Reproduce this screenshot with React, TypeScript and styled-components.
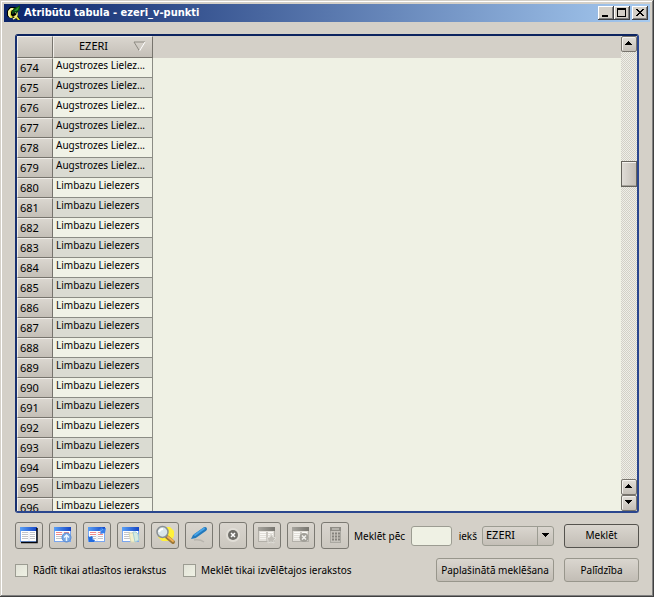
import React from 'react';
import styled, { createGlobalStyle, css } from 'styled-components';

const GlobalStyle = createGlobalStyle`
  * { box-sizing: border-box; }
  html, body { margin: 0; padding: 0; }
  body, button, input, select, table {
    font-family: "Noto Sans", "Open Sans", sans-serif;
    font-size: 10px;
    line-height: 14px;
    color: #000;
  }
`;

const Dialog = styled.div`
  display: flex;
  flex-direction: column;
  height: 100vh;
  padding: 2px;
  background: #d4d0c8;
  box-shadow: inset -1px -1px #404040, inset 1px 1px #d4d0c8, inset -2px -2px #808080, inset 2px 2px #fff;
`;

const TitleBar = styled.header`
  display: flex;
  align-items: center;
  gap: 2px;
  flex: none;
  height: 18px;
  margin: 2px 2px 0;
  padding: 0 2px;
  background: linear-gradient(90deg, #0a246a, #a6caf0);
`;

const TitleText = styled.h1`
  flex: 1;
  margin: 0;
  color: #fff;
  font-family: "DejaVu Sans Condensed", "DejaVu Sans", sans-serif;
  font-size: 11px;
  font-weight: 700;
  white-space: nowrap;
`;

const CaptionButton = styled.button<{ $apart?: boolean }>`
  display: flex;
  width: 16px;
  height: 14px;
  margin-left: ${(p) => (p.$apart ? 0 : -2)}px;
  padding: 0;
  border: 0;
  background: #d4d0c8;
  box-shadow: inset -1px -1px #404040, inset 1px 1px #fff, inset -2px -2px #808080;
`;

const Body = styled.main`
  display: flex;
  flex-direction: column;
  flex: 1;
  min-height: 0;
  padding: 12px 13px 0;
`;

const TableFrame = styled.section`
  display: flex;
  flex: 1;
  min-height: 0;
  border: 2px solid #2a468e;
  border-top-color: #0c2460;
  border-left-color: #183070;
  border-radius: 3px;
  background: #eff1e4;
`;

const TableView = styled.div`
  flex: 1;
  overflow: hidden;
  background: linear-gradient(#d4d0c8 22px, #eff1e4 22px);
`;

const Table = styled.table`
  width: 136px;
  table-layout: fixed;
  border-collapse: separate;
  border-spacing: 0;
`;

const raised = css`
  background: linear-gradient(#dad6cf, #c4bfb7);
  border: 1px solid #77746d;
  border-top-color: #f0ede8;
  border-left-color: #f0ede8;
  font-size: 11px;
  font-weight: 400;
`;

const ColumnHead = styled.th<{ $width: number }>`
  ${raised}
  width: ${(p) => p.$width}px;
  height: 22px;
  padding: 0;
`;

const HeadLabel = styled.span`
  display: flex;
  align-items: center;
  justify-content: space-between;
  padding: 0 6px 2px 25px;
`;

const RowHead = styled.th`
  ${raised}
  height: 20px;
  padding: 0 0 0 2px;
  text-align: left;
`;

const Cell = styled.td`
  height: 20px;
  padding: 0 3px 5px 3px;
  border-right: 1px solid #8b8c84;
  border-bottom: 1px solid #8b8c84;
  white-space: nowrap;
`;

const Row = styled.tr`
  background: #f0f2e6;
  &:nth-child(even) { background: #dadbd2; }
`;

const ScrollBar = styled.div`
  display: flex;
  flex-direction: column;
  width: 16px;
  background: repeating-conic-gradient(#d2d0c6 0 25%, #efeee8 0 50%) 0 0 / 2px 2px;
`;

const ScrollButton = styled.button`
  display: flex;
  align-items: center;
  justify-content: center;
  flex: none;
  height: 16px;
  padding: 0 2px 2px 0;
  border: 1px solid #77746d;
  border-radius: 2px;
  background: linear-gradient(#e2dfd9, #c4bfb7);
  box-shadow: inset 1px 1px #f4f2ee;
`;

const Track = styled.div`
  display: flex;
  flex-direction: column;
  flex: 1;
`;

const TrackSpace = styled.div<{ $share: number }>`
  flex: ${(p) => p.$share};
`;

const Thumb = styled.div`
  height: 26px;
  border: 1px solid #66645d;
  background: linear-gradient(90deg, #dfdcd6, #c4bfb7);
  box-shadow: inset 0 1px #f4f2ee, inset 0 -1px #a5a29a;
`;

const ToolRow = styled.div`
  display: flex;
  align-items: center;
  flex: none;
  height: 27px;
  margin-top: 9px;
`;

const Tools = styled.div`
  display: flex;
  gap: 6px;
`;

const ToolButton = styled.button`
  display: flex;
  align-items: center;
  justify-content: center;
  width: 28px;
  height: 27px;
  padding: 0 0 1px;
  border: 1px solid #7b7972;
  border-radius: 3px;
  background: linear-gradient(#d9d5ce, #cbc7bf);
`;

const FieldLabel = styled.label`
  margin-left: 5px;
  white-space: nowrap;
`;

const SearchInput = styled.input`
  flex: 1;
  min-width: 0;
  height: 20px;
  margin: 0 2px 0 6px;
  padding: 0 3px;
  border: 1px solid #9c9c92;
  border-radius: 3px;
  background: #eff1e4;
`;

const SelectBox = styled.div`
  display: grid;
  width: 72px;
  height: 20px;
  margin: 0 10px 0 5px;
`;

const Select = styled.select`
  grid-area: 1 / 1;
  height: 20px;
  padding: 0 18px 1px 3px;
  appearance: none;
  border: 1px solid #9c9c92;
  border-radius: 3px;
  background: linear-gradient(#dad6cf, #c4bfb7);
  font-size: 11px;
`;

const SelectArrow = styled.span`
  grid-area: 1 / 1;
  justify-self: end;
  display: flex;
  align-items: center;
  justify-content: center;
  width: 17px;
  margin: 1px 0;
  padding: 0 2px 1px 0;
  border-left: 1px solid #9c9c92;
  pointer-events: none;
`;

const PushButton = styled.button<{ $width: number; $main?: boolean }>`
  flex: none;
  width: ${(p) => p.$width}px;
  height: 24px;
  padding: 0 0 1px;
  border: 1px solid ${(p) => (p.$main ? '#55534e' : '#98968c')};
  border-radius: 3px;
  background: linear-gradient(#dad6cf, #c2bdb5);
  white-space: nowrap;
`;

const OptionRow = styled.div`
  display: flex;
  align-items: center;
  flex: none;
  height: 24px;
  margin: 9px 0 13px;
`;

const CheckLabel = styled.label<{ $width: number }>`
  display: flex;
  align-items: center;
  gap: 5px;
  width: ${(p) => p.$width}px;
  white-space: nowrap;
`;

const CheckBox = styled.input`
  flex: none;
  width: 13px;
  height: 13px;
  margin: 0;
  appearance: none;
  border: 1px solid #9c9c92;
  background: linear-gradient(135deg, #e2e3d8, #eff1e4);
`;

const ButtonPair = styled.div`
  display: flex;
  gap: 10px;
  margin-left: auto;
`;

const Arrow = ({ down = false }: { down?: boolean }) => (
  <svg width="7" height="4" viewBox="0 0 7 4" shapeRendering="crispEdges" aria-hidden="true">
    <path d={down ? 'M0 0h7v1H6v1H5v1H4v1H3V3H2V2H1V1H0z' : 'M0 4h7V3H6V2H5V1H4V0H3v1H2v1H1v1H0z'} />
  </svg>
);

const AppLogo = () => (
  <svg width="16" height="16" viewBox="0 0 16 16" aria-hidden="true">
    <path d="M4 2h6l2 3v6l2 3v1h-3l-2-2H4L1 11V6z" fill="#000" />
    <path d="M5 3h3v2H6L5 7v3l2 2h2l3 3h2l-3-4v-1h-1l-2 1-2 2H4l-2-3V6z" fill="#d9d93c" />
    <path d="M3 6l2-2h2M3 6v4l1 2" fill="none" stroke="#fdfcc0" strokeWidth="1.500" />
    <path d="M9 7l2 1v2l-2 3-2 1" fill="none" stroke="#f2f08c" strokeWidth="1.500" />
    <path d="M6 9V6l2-3 3-1 3-2v3l-1 3-2 1v2L9 7 7 9z" fill="#0b4a14" />
    <path d="M8 6l3-3 2-1-1 3-2 1z" fill="#2b9a2b" />
  </svg>
);

const Sheet = ({ gray = false, red = false }: { gray?: boolean; red?: boolean }) => {
  const id = gray ? 'grayBar' : 'blueBar';
  return (
    <>
      <defs>
        <linearGradient id={id} x2="1" y2="0">
          <stop stopColor={gray ? '#a7a59e' : '#5aa0f6'} />
          <stop offset="1" stopColor={gray ? '#77756f' : '#1544c4'} />
        </linearGradient>
      </defs>
      <rect x="0.500" y="0.500" width="16" height="14" fill={gray ? '#e2dfd9' : '#fff'} stroke={gray ? '#b3b0a9' : '#7aa6ee'} />
      <rect width="17" height="4" fill={`url(#${id})`} />
      <path d="M2 5.500h6M10 5.500h5M2 7.500h6M10 7.500h5" stroke={gray ? '#fbfaf7' : red ? '#f08a8a' : '#c2c4ca'} />
      <path d="M2 9.500h6M10 9.500h5M2 11.500h6M10 11.500h5" stroke={gray ? '#f6f5f1' : '#c2c4ca'} />
      <path d="M9 5v9" stroke={gray ? '#b3b0aa' : '#e3e6ee'} />
    </>
  );
};

type IconName = 'table' | 'top' | 'invert' | 'copy' | 'zoom' | 'edit' | 'remove' | 'addColumn' | 'dropColumn' | 'calculator';

const drawings: Record<IconName, React.ReactNode> = {
  table: (
    <>
      <Sheet />
      <path d="M17 1v14.500H1" fill="none" stroke="#05060b" strokeWidth="1.500" />
    </>
  ),
  top: (
    <>
      <Sheet red />
      <circle cx="12.500" cy="10.500" r="4.500" fill="#79a8e4" stroke="#5a8bd2" />
      <path d="M12.500 14V9M10 10.500l2.500-2.500 2.500 2.500" fill="none" stroke="#eef7ff" strokeWidth="1.500" />
    </>
  ),
  invert: (
    <>
      <Sheet red />
      <path d="M11 3l3-3 1 2 3-1-1 5-5 1 1-2z" fill="#377fea" />
      <path d="M0 9l2 1 2-1 1 2-1 1 3 1-1 2H1z" fill="#226ce0" />
      <path d="M12 4q2 0 3-2" fill="none" stroke="#6aa8f8" />
    </>
  ),
  copy: (
    <>
      <Sheet />
      <path d="M7 6h4l2 2v7H9z" fill="#f3f0cc" stroke="#dcdab4" />
      <path d="M11 5h3l2 2 1 6-4 2z" fill="#d6ebe0" stroke="#a6cfd6" />
    </>
  ),
  zoom: (
    <>
      <path d="M8 0h6l4 4v5l-3 5H6l-4-4z" fill="#fff13a" />
      <path d="M11 10l6 5" stroke="#9c7838" strokeWidth="4" strokeLinecap="round" />
      <path d="M12 10l5 4" stroke="#f4b453" strokeWidth="2" strokeLinecap="round" />
      <circle cx="6.500" cy="5" r="5.500" fill="#d9e6ea" stroke="#8a9094" strokeWidth="1.500" />
      <path d="M3 5q1-3 4-3" fill="none" stroke="#fff" strokeWidth="2" />
    </>
  ),
  edit: (
    <>
      <path d="M4 13q6-1 10 2" fill="none" stroke="#b8b5ae" strokeWidth="1.500" />
      <path d="M5 9L15 2" stroke="#2379bc" strokeWidth="4" strokeLinecap="round" />
      <path d="M5 8L14 1.500" stroke="#4aa4e6" strokeWidth="2" strokeLinecap="round" />
      <path d="M1 12l2-4 3 3z" fill="#2379bc" />
    </>
  ),
  remove: (
    <>
      <circle cx="9" cy="8" r="7" fill="#e1ded7" />
      <circle cx="9" cy="8" r="5" fill="#6f6e69" />
      <path d="M7 6l4 4M11 6l-4 4" stroke="#fff" strokeWidth="1.500" />
    </>
  ),
  addColumn: (
    <>
      <Sheet gray />
      <path d="M13 7l2 3 3 1-2 2v3l-3-1-3 1v-3l-1-2 3-1z" fill="#c0bdb6" stroke="#dedcd6" />
    </>
  ),
  dropColumn: (
    <>
      <Sheet gray />
      <circle cx="12" cy="10.500" r="4.500" fill="#a19f98" />
      <path d="M10 8.500l4 4M14 8.500l-4 4" stroke="#f2f1ed" strokeWidth="1.500" />
    </>
  ),
  calculator: (
    <>
      <rect x="4.500" y="0.500" width="10" height="15" fill="#c6c3bc" stroke="#aaa8a1" />
      <rect x="4" y="0" width="11" height="4" fill="#8f8d86" />
      <path d="M6 2h7" stroke="#dad7d0" />
      <path d="M6 6.500h8M6 9.500h8M6 12.500h8" stroke="#85837d" strokeWidth="2" strokeDasharray="2 1" />
    </>
  ),
};

const tools: { icon: IconName; label: string }[] = [
  { icon: 'table', label: 'Noņemt atlasi' },
  { icon: 'top', label: 'Pārvietot atlasīto uz augšu' },
  { icon: 'invert', label: 'Invertēt atlasi' },
  { icon: 'copy', label: 'Kopēt atlasītās rindas' },
  { icon: 'zoom', label: 'Tuvināt atlasītajam' },
  { icon: 'edit', label: 'Rediģēt' },
  { icon: 'remove', label: 'Dzēst atlasīto' },
  { icon: 'addColumn', label: 'Jauna kolonna' },
  { icon: 'dropColumn', label: 'Dzēst kolonnu' },
  { icon: 'calculator', label: 'Lauku kalkulators' },
];

const firstRow = 674;
const rows = Array.from({ length: 23 }, (_, i) => ({
  id: firstRow + i,
  lake: i < 6 ? 'Augstrozes Lielez...' : 'Limbazu Lielezers',
}));

export default function App() {
  return (
    <>
      <GlobalStyle />
      <Dialog>
        <TitleBar>
          <AppLogo />
          <TitleText>Atribūtu tabula - ezeri_v-punkti</TitleText>
          <CaptionButton aria-label="Minimize">
            <svg width="16" height="14" aria-hidden="true"><path d="M4 9h6v2H4z" /></svg>
          </CaptionButton>
          <CaptionButton aria-label="Maximize">
            <svg width="16" height="14" shapeRendering="crispEdges" aria-hidden="true">
              <path d="M3 2h9v9H3zM4 4v6h7V4z" fillRule="evenodd" />
            </svg>
          </CaptionButton>
          <CaptionButton $apart aria-label="Close">
            <svg width="16" height="14" shapeRendering="crispEdges" aria-hidden="true">
              <path d="M4 3h2v1h1v1h2V4h1V3h2v1h-1v1h-1v1H9v1h1v1h1v1h1v1h-2V9H9V8H7v1H6v1H4V9h1V8h1V7h1V6H6V5H5V4H4z" />
            </svg>
          </CaptionButton>
        </TitleBar>
        <Body>
          <TableFrame>
            <TableView>
              <Table>
                <thead>
                  <tr>
                    <ColumnHead $width={36} aria-label="Nr." />
                    <ColumnHead $width={100} scope="col">
                      <HeadLabel>
                        EZERI
                        <svg width="13" height="11" viewBox="0 0 13 11" aria-hidden="true">
                          <path d="M1 1h11" stroke="#8d8a82" />
                          <path d="M1 1l5.500 9" stroke="#8d8a82" />
                          <path d="M12 1L6.500 10" stroke="#fff" />
                        </svg>
                      </HeadLabel>
                    </ColumnHead>
                  </tr>
                </thead>
                <tbody>
                  {rows.map((row) => (
                    <Row key={row.id}>
                      <RowHead scope="row">{row.id}</RowHead>
                      <Cell>{row.lake}</Cell>
                    </Row>
                  ))}
                </tbody>
              </Table>
            </TableView>
            <ScrollBar>
              <ScrollButton aria-label="Uz augšu"><Arrow /></ScrollButton>
              <Track>
                <TrackSpace $share={109} />
                <Thumb />
                <TrackSpace $share={293} />
              </Track>
              <ScrollButton aria-label="Rindu augšup"><Arrow /></ScrollButton>
              <ScrollButton aria-label="Rindu lejup"><Arrow down /></ScrollButton>
            </ScrollBar>
          </TableFrame>
          <ToolRow>
            <Tools>
              {tools.map((tool) => (
                <ToolButton key={tool.icon} aria-label={tool.label}>
                  <svg width="18" height="16" viewBox="0 0 18 16" overflow="visible" aria-hidden="true">
                    {drawings[tool.icon]}
                  </svg>
                </ToolButton>
              ))}
            </Tools>
            <FieldLabel htmlFor="query">Meklēt pēc</FieldLabel>
            <SearchInput id="query" type="text" />
            <FieldLabel htmlFor="column">iekš</FieldLabel>
            <SelectBox>
              <Select id="column" defaultValue="EZERI">
                <option>EZERI</option>
              </Select>
              <SelectArrow><Arrow down /></SelectArrow>
            </SelectBox>
            <PushButton $width={75} $main>Meklēt</PushButton>
          </ToolRow>
          <OptionRow>
            <CheckLabel $width={168}>
              <CheckBox type="checkbox" />
              Rādīt tikai atlasītos ierakstus
            </CheckLabel>
            <CheckLabel $width={180}>
              <CheckBox type="checkbox" />
              Meklēt tikai izvēlētajos ierakstos
            </CheckLabel>
            <ButtonPair>
              <PushButton $width={118}>Paplašinātā meklēšana</PushButton>
              <PushButton $width={75}>Palīdzība</PushButton>
            </ButtonPair>
          </OptionRow>
        </Body>
      </Dialog>
    </>
  );
}
